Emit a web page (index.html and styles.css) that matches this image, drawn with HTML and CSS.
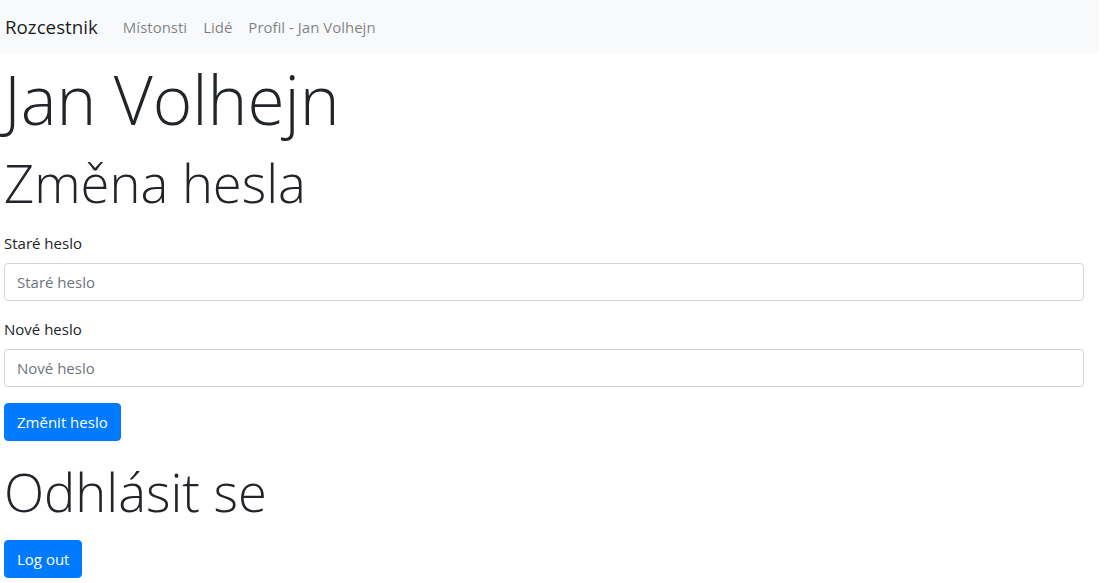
FILE: index.html
```html
<!DOCTYPE html>
<html lang="cs">
<head>
<meta charset="utf-8">
<title>Rozcestnik</title>
<link rel="stylesheet" href="styles.css">
</head>
<body>
<div class="page">
  <nav class="navbar">
    <a class="brand" href="#">Rozcestnik</a>
    <a class="nav-link" href="#">Místonsti</a>
    <a class="nav-link" href="#">Lidé</a>
    <a class="nav-link" href="#">Profil - Jan Volhejn</a>
  </nav>
  <main class="content">
    <h1 class="display-3">Jan Volhejn</h1>
    <h2 class="display-4 section-title">Změna hesla</h2>
    <form class="pw-form">
      <div class="form-group">
        <label class="form-label" for="old">Staré heslo</label>
        <input class="form-control" id="old" type="password" placeholder="Staré heslo">
      </div>
      <div class="form-group">
        <label class="form-label" for="new">Nové heslo</label>
        <input class="form-control" id="new" type="password" placeholder="Nové heslo">
      </div>
      <button class="btn" type="button">Změnit heslo</button>
    </form>
    <h2 class="display-4 section-title">Odhlásit se</h2>
    <button class="btn" type="button">Log out</button>
  </main>
</div>
</body>
</html>
```
FILE: styles.css
```css
* { box-sizing: border-box; }
html, body { margin: 0; padding: 0; }
body {
  font-family: "Open Sans", "Liberation Sans", sans-serif;
  font-size: 15px;
  line-height: 24px;
  color: #212529;
  background: #fff;
}
.page { width: 1099px; }
.navbar {
  display: flex;
  align-items: center;
  height: 53px;
  padding: 0 5px;
  background: #f8f9fa;
}
.brand {
  font-size: 18.75px;
  line-height: 30px;
  color: rgba(0,0,0,.9);
  text-decoration: none;
  margin-right: 17px;
}
.nav-link {
  padding: 0 8px;
  color: rgba(0,0,0,.5);
  text-decoration: none;
}
.content { padding: 0 15px 0 4px; }
h1, h2 { margin: 0; font-weight: 300; }
.display-3 {
  font-size: 67.5px;
  line-height: 86px;
  margin-top: 3px;
  margin-bottom: 7px;
}
.display-4 {
  font-size: 52.5px;
  line-height: 67px;
}
.section-title { margin-bottom: 15px; }
.pw-form { margin-bottom: 17px; }
.form-group { margin-bottom: 16px; }
.form-label {
  display: block;
  margin-bottom: 8px;
}
.form-control {
  display: block;
  width: 100%;
  height: 38px;
  padding: 6px 12px;
  font: inherit;
  color: #495057;
  border: 1px solid #ced4da;
  border-radius: 4px;
  background: #fff;
}
.form-control::placeholder { color: #6c757d; opacity: 1; }
.btn {
  display: block;
  height: 38px;
  padding: 6px 12px;
  font: inherit;
  color: #fff;
  background: #007bff;
  border: 1px solid #007bff;
  border-radius: 4px;
}
```
